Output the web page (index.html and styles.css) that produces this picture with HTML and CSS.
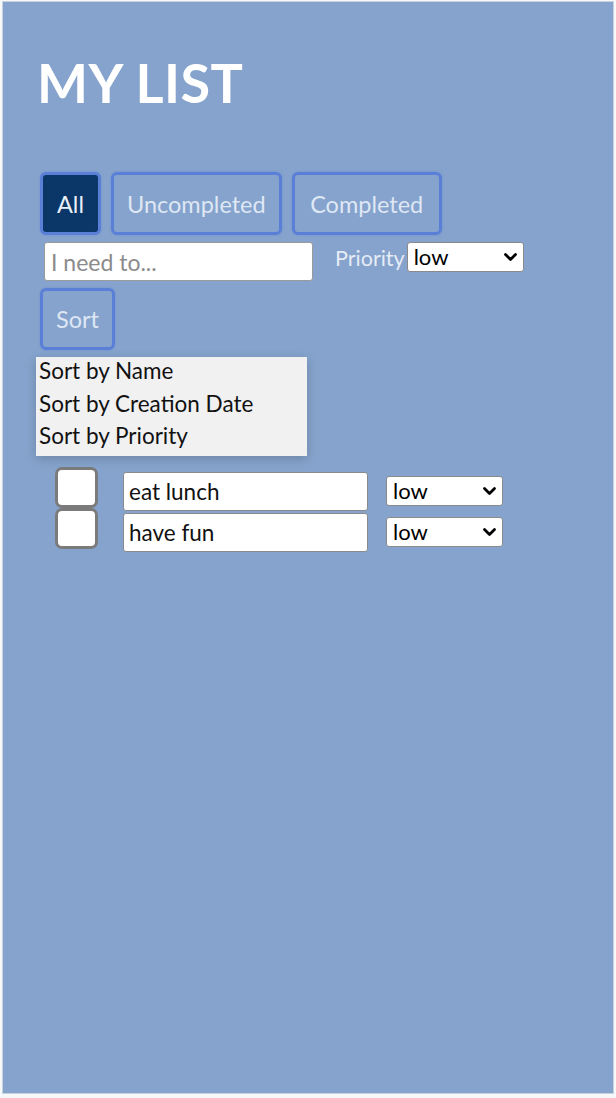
FILE: index.html
```html
<!DOCTYPE html>
<html>
<head>
<meta charset="utf-8">
<link rel="stylesheet" href="styles.css">
</head>
<body>
<div class="panel">
  <h1 class="title">MY LIST</h1>
  <div class="filters">
    <button class="btn active">All</button>
    <button class="btn">Uncompleted</button>
    <button class="btn wide">Completed</button>
  </div>
  <div class="add-row">
    <input class="new-input" type="text" placeholder="I need to...">
    <span class="label">Priority</span>
    <div class="sel-wrap sel-main">
      <select class="sel"><option>low</option><option>medium</option><option>high</option></select>
      <svg class="chev" viewBox="0 0 14 10"><path d="M2 2.5 L7 7.5 L12 2.5" fill="none" stroke="#000" stroke-width="2.8" stroke-linecap="round" stroke-linejoin="round"/></svg>
    </div>
  </div>
  <div class="sort-area">
    <button class="btn sort">Sort</button>
    <ul class="menu">
      <li>Sort by Name</li>
      <li>Sort by Creation Date</li>
      <li>Sort by Priority</li>
    </ul>
  </div>
  <ul class="list">
    <li class="item">
      <span class="check"></span>
      <input class="item-input" type="text" value="eat lunch">
      <div class="sel-wrap sel-item">
        <select class="sel"><option>low</option><option>medium</option><option>high</option></select>
        <svg class="chev" viewBox="0 0 14 10"><path d="M2 2.5 L7 7.5 L12 2.5" fill="none" stroke="#000" stroke-width="2.8" stroke-linecap="round" stroke-linejoin="round"/></svg>
      </div>
    </li>
    <li class="item">
      <span class="check"></span>
      <input class="item-input" type="text" value="have fun">
      <div class="sel-wrap sel-item">
        <select class="sel"><option>low</option><option>medium</option><option>high</option></select>
        <svg class="chev" viewBox="0 0 14 10"><path d="M2 2.5 L7 7.5 L12 2.5" fill="none" stroke="#000" stroke-width="2.8" stroke-linecap="round" stroke-linejoin="round"/></svg>
      </div>
    </li>
  </ul>
</div>
</body>
</html>
```
FILE: styles.css
```css
* { box-sizing: border-box; }
html, body { margin: 0; padding: 0; }
body {
  background: #f7f8f9;
  font-family: Lato, "Open Sans", sans-serif;
  width: 616px;
  height: 1098px;
  overflow: hidden;
}
.panel {
  margin: 1px 2px 0 2px;
  width: 612px;
  height: 1093px;
  background: #85a3cc;
  border: 1px solid #c9d2dd;
  padding: 0 0 0 34px;
  position: relative;
}
.title {
  margin: 0;
  padding-top: 48px;
  font-size: 54px;
  line-height: 66px;
  font-weight: 700;
  color: #ffffff;
  letter-spacing: 0.5px;
}
.filters {
  display: flex;
  gap: 10px;
  margin-top: 56px;
  margin-left: 3px;
}
.btn {
  height: 63px;
  padding: 0 13px;
  border: 3px solid #5a7fd6;
  border-radius: 6px;
  background: transparent;
  color: #dfe7f4;
  font-family: Lato, "Open Sans", sans-serif;
  font-size: 23.5px;
  box-shadow: 0 0 2px rgba(90,127,214,0.6);
}
.btn.active {
  background: #0b3668;
  color: #e9eef7;
  padding: 0 14px;
}
.btn.wide {
  padding: 0 15.5px;
}
.add-row {
  display: flex;
  align-items: flex-start;
  margin-top: 7px;
  margin-left: 7px;
}
.new-input {
  width: 269px;
  height: 39px;
  border: 1px solid #9a9a9a;
  border-radius: 3px;
  background: #fff;
  padding: 0 6px;
  font-family: Lato, "Open Sans", sans-serif;
  font-size: 23px;
  color: #000;
}
.new-input::placeholder { color: #8b8b8b; }
.label {
  margin-left: 22px;
  margin-top: 3px;
  font-size: 21.5px;
  color: #e6ecf6;
  line-height: 26px;
}
.sel-wrap {
  position: relative;
}
.sel-main { margin-left: 2px; }
.sel {
  appearance: none;
  -webkit-appearance: none;
  width: 117px;
  height: 30px;
  border: 1px solid #8a8a8a;
  border-radius: 3px;
  background: #fff;
  padding: 0 6px;
  font-family: Lato, "Open Sans", sans-serif;
  font-size: 22px;
  color: #000;
  line-height: 28px;
}
.chev {
  position: absolute;
  right: 6px;
  top: 10px;
  width: 15px;
  height: 10px;
  pointer-events: none;
}
.sort-area {
  position: relative;
  margin-top: 7px;
  margin-left: 3px;
}
.btn.sort {
  height: 62px;
  padding: 0 13px;
}
.menu {
  position: absolute;
  left: -4px;
  top: 69px;
  width: 271px;
  margin: 0;
  padding: 0 0 1px 3px;
  list-style: none;
  background: #f1f1f1;
  box-shadow: 0 3px 10px rgba(0,0,0,0.18);
  z-index: 2;
}
.menu li {
  font-size: 22.5px;
  line-height: 28px;
  padding-bottom: 4.5px;
  color: #111;
}
.list {
  list-style: none;
  margin: 117px 0 0 18px;
  padding: 0;
}
.item {
  display: flex;
  align-items: flex-start;
  height: 41px;
}
.check {
  width: 43px;
  height: 41px;
  border: 3px solid #7b7b7b;
  border-radius: 7px;
  background: #fff;
}
.item-input {
  margin-left: 25px;
  margin-top: 5px;
  width: 245px;
  height: 39px;
  border: 1px solid #8a8a8a;
  border-radius: 3px;
  background: #fff;
  padding: 0 5px;
  font-family: Lato, "Open Sans", sans-serif;
  font-size: 22.5px;
  color: #111;
}
.sel-item {
  margin-left: 18px;
  margin-top: 9px;
}
```
